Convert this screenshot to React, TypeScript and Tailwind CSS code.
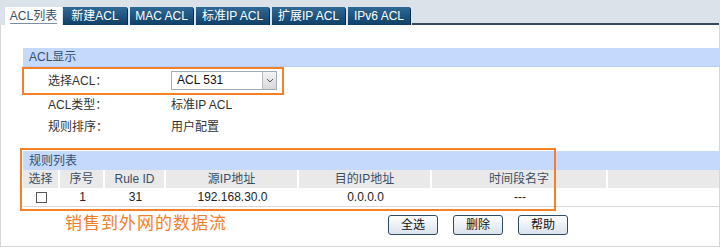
import React from 'react';

const tabs = ['新建ACL', 'MAC ACL', '标准IP ACL', '扩展IP ACL', 'IPv6 ACL'];
const tabWidths = [65, 64, 74, 74, 63];

const columns = [
  { label: '选择', w: 37 },
  { label: '序号', w: 45 },
  { label: 'Rule ID', w: 61 },
  { label: '源IP地址', w: 133 },
  { label: '目的IP地址', w: 133 },
  { label: '时间段名字', w: 176 },
  { label: '', w: 110 },
];

const rows = [{ no: '1', ruleId: '31', src: '192.168.30.0', dst: '0.0.0.0', time: '---' }];

function Btn({ label }: { label: string }) {
  return (
    <button className="w-[50px] h-[20px] rounded-[3px] border border-[#2f4a66] bg-gradient-to-b from-white to-[#d9e2ec] text-[12px] text-[#111] leading-none">
      {label}
    </button>
  );
}

export default function App() {
  return (
    <div
      className="relative w-[720px] h-[247px] overflow-hidden bg-white text-[12px] text-[#333]"
      style={{ fontFamily: '"Liberation Sans", "Noto Sans CJK SC", sans-serif' }}
    >
      {/* Tab bar */}
      <div className="flex items-end h-[25px] bg-[#dbe2ea] pl-[5px] pr-[1px]">
        <div className="flex items-center justify-center w-[57px] h-[18px] bg-white">
          <span className="text-[#3b4f66] border-b border-[#7d8fa6] leading-[14px]">ACL列表</span>
        </div>
        {tabs.map((t, i) => (
          <div
            key={t}
            style={{ width: tabWidths[i] }}
            className="flex items-center justify-center h-[18px] ml-[1px] mr-[1px] rounded-tr-[3px] bg-gradient-to-b from-[#2f6a96] to-[#0f4068] text-white border-r border-[#0b2d4a]"
          >
            {t}
          </div>
        ))}
        <div className="flex-1 h-[2px] bg-[#34495e]" />
      </div>

      {/* Content frame */}
      <div className="h-[222px] border-l border-r border-b border-[#d6d6d6] pl-[22px] pt-[23px]">
        <div className="h-[19px] bg-[#c5d9fd] border-b border-[#b7cdf5] flex items-center pl-[6px] text-[#34506e]">
          ACL显示
        </div>

        <div className="flex items-center h-[27px]">
          <span className="w-[148px] pl-[25px]">选择ACL：</span>
          <div className="flex w-[106px] h-[19px] border border-[#a4abb4] bg-white">
            <span className="flex-1 pl-[5px] leading-[17px] text-[#111]">ACL 531</span>
            <div className="w-[14px] h-full border-l border-[#b7bcc3] bg-gradient-to-b from-[#f4f4f4] to-[#d8d8d8] flex items-center justify-center">
              <svg width="8" height="5" viewBox="0 0 8 5">
                <path d="M1 1 L4 4 L7 1" stroke="#555" strokeWidth="1" fill="none" />
              </svg>
            </div>
          </div>
        </div>
        <div className="flex items-center h-[22px]">
          <span className="w-[148px] pl-[25px]">ACL类型：</span>
          <span>标准IP ACL</span>
        </div>
        <div className="flex items-center h-[22px]">
          <span className="w-[148px] pl-[25px]">规则排序：</span>
          <span>用户配置</span>
        </div>

        <div className="mt-[13px] h-[19px] bg-[#c5d9fd] flex items-center pl-[6px] text-[#34506e]">规则列表</div>
        <div className="flex h-[18px] bg-[#e9e9e9] text-[#3a4f66]">
          {columns.map((c, i) => (
            <div
              key={i}
              style={{ width: c.w }}
              className={`flex items-center justify-center ${i < columns.length - 1 ? 'border-r-2 border-white' : ''}`}
            >
              {c.label}
            </div>
          ))}
        </div>
        {rows.map((r) => (
          <div key={r.no} className="flex h-[19px] border-b border-[#d9d9d9] text-[#222]">
            <div style={{ width: 37 }} className="flex items-center justify-center">
              <div className="w-[11px] h-[11px] border border-[#555] bg-white" />
            </div>
            <div style={{ width: 45 }} className="flex items-center justify-center">{r.no}</div>
            <div style={{ width: 61 }} className="flex items-center justify-center">{r.ruleId}</div>
            <div style={{ width: 133 }} className="flex items-center justify-center">{r.src}</div>
            <div style={{ width: 133 }} className="flex items-center justify-center">{r.dst}</div>
            <div style={{ width: 176 }} className="flex items-center justify-center">{r.time}</div>
            <div className="flex-1" />
          </div>
        ))}

        <div className="flex items-center h-[34px]">
          <span className="ml-[42px] w-[323px] text-[17px] text-[#f27f2b] tracking-[1px]">销售到外网的数据流</span>
          <div className="flex gap-[15px] pt-[2px]">
            <Btn label="全选" />
            <Btn label="删除" />
            <Btn label="帮助" />
          </div>
        </div>
      </div>

      {/* Highlight boxes */}
      <div className="absolute left-[22px] top-[67px] w-[262px] h-[28px] border-2 border-[#f5802a] pointer-events-none" />
      <div className="absolute left-[20px] top-[148px] w-[536px] h-[63px] border-2 border-[#f5802a] pointer-events-none" />
    </div>
  );
}
